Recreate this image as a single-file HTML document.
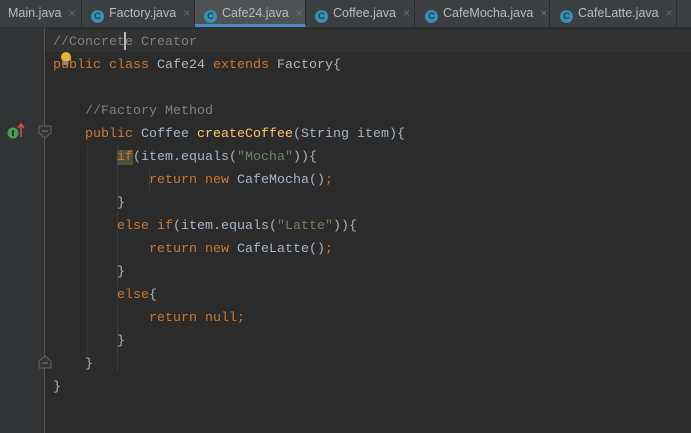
<!DOCTYPE html>
<html><head><meta charset="utf-8"><style>
*{margin:0;padding:0;box-sizing:border-box}
body{width:691px;height:433px;background:#2b2b2b;overflow:hidden;position:relative;font-family:"Liberation Mono",monospace}
.tabs{position:absolute;left:0;top:0;width:691px;height:28px;background:#3c3f41;border-bottom:1px solid #323232}
.tab{position:absolute;top:0;height:27px;font-family:"Liberation Sans",sans-serif;font-size:12.5px;color:#bbbbbb;line-height:27px;border-right:1px solid #2b2b2b;white-space:nowrap}
.tab .ic{display:inline-block;width:13px;height:13px;border-radius:50%;background:#3a8eb3;color:#1d3d4c;font-size:9px;line-height:13px;text-align:center;vertical-align:-2px;margin-right:5px;font-weight:bold}
.tab .x{color:#6e6e6e;margin-left:7px;font-size:12px}
.tab.act{background:#4e5254;border-bottom:3px solid #4a88c7;height:27px}
.gutter{position:absolute;left:0;top:28px;width:45px;height:405px;background:#313335;border-right:1px solid #555}
.cur{position:absolute;left:46px;top:29px;width:645px;height:23px;background:#323232}
.code{position:absolute;left:53px;top:31px;font-size:13.33px;line-height:23px;color:#a9b7c6;white-space:pre}
.k{color:#cc7832}.c{color:#808080}.s{color:#6a8759}.m{color:#ffc66d}
.hl{background:#52503a}
.guide{position:absolute;width:1px;background:#3b3b3b}
</style></head><body>
<div class="tabs">
<div class="tab" style="left:0;width:82px;padding-left:8px">Main.java<span class="x">×</span></div>
<div class="tab" style="left:82px;width:113px;padding-left:9px"><span class="ic">C</span>Factory.java<span class="x">×</span></div>
<div class="tab act" style="left:195px;width:111px;padding-left:9px"><span class="ic">C</span>Cafe24.java<span class="x">×</span></div>
<div class="tab" style="left:306px;width:109px;padding-left:9px"><span class="ic">C</span>Coffee.java<span class="x">×</span></div>
<div class="tab" style="left:415px;width:135px;padding-left:10px"><span class="ic">C</span>CafeMocha.java<span class="x">×</span></div>
<div class="tab" style="left:550px;width:127px;padding-left:10px"><span class="ic">C</span>CafeLatte.java<span class="x">×</span></div>
</div>
<div class="gutter"></div>
<div class="cur"></div>
<div class="guide" style="left:117px;top:146px;height:225px"></div>
<div class="guide" style="left:149px;top:169px;height:23px"></div>
<div class="guide" style="left:87px;top:146px;height:210px;background:#363636"></div>
<svg style="position:absolute;left:0;top:115px" width="60" height="260">
<circle cx="13" cy="18" r="5.5" fill="#499c54"/><rect x="12" y="15" width="2" height="6" fill="#1e3a22"/>
<path d="M21 22V10M18 13l3-4 3 4" stroke="#c75450" stroke-width="1.6" fill="none"/>
<path d="M39 11h12v7l-6 5l-6-5z" stroke="#666" fill="#313335"/><path d="M42 16h6" stroke="#777"/>
<path d="M39 253h12v-7l-6-5l-6 5z" stroke="#666" fill="#313335"/><path d="M42 248h6" stroke="#777"/>
</svg>
<svg style="position:absolute;left:59px;top:51px" width="14" height="16"><circle cx="7" cy="6" r="5" fill="#e8b13a"/><rect x="4.5" y="10" width="5" height="4" fill="#8a8a8a"/></svg>
<div style="position:absolute;left:124px;top:32px;width:2px;height:18px;background:#bbb"></div>
<div class="code"><span class="c">//Concrete Creator</span>
<span class="k">public class </span>Cafe24 <span class="k">extends </span>Factory{

    <span class="c">//Factory Method</span>
    <span class="k">public </span>Coffee <span class="m">createCoffee</span>(String item){
        <span class="k hl">if</span>(item.equals(<span class="s">"Mocha"</span>)){
            <span class="k">return new </span>CafeMocha()<span class="k">;</span>
        }
        <span class="k">else if</span>(item.equals(<span class="s">"Latte"</span>)){
            <span class="k">return new </span>CafeLatte()<span class="k">;</span>
        }
        <span class="k">else</span>{
            <span class="k">return null;</span>
        }
    }
}</div>
</body></html>
